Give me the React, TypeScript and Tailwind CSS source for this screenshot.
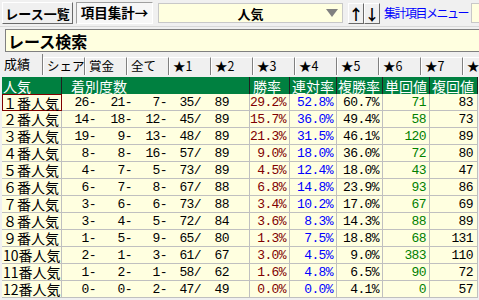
import React from "react";

const rows: string[][] = [
  ["１番人気", "26", "21", "7", "35", "89", "29.2%", "52.8%", "60.7%", "71", "83"],
  ["２番人気", "14", "18", "12", "45", "89", "15.7%", "36.0%", "49.4%", "58", "73"],
  ["３番人気", "19", "9", "13", "48", "89", "21.3%", "31.5%", "46.1%", "120", "89"],
  ["４番人気", "8", "8", "16", "57", "89", "9.0%", "18.0%", "36.0%", "72", "80"],
  ["５番人気", "4", "7", "5", "73", "89", "4.5%", "12.4%", "18.0%", "43", "47"],
  ["６番人気", "6", "7", "8", "67", "88", "6.8%", "14.8%", "23.9%", "93", "86"],
  ["７番人気", "3", "6", "6", "73", "88", "3.4%", "10.2%", "17.0%", "67", "69"],
  ["８番人気", "3", "4", "5", "72", "84", "3.6%", "8.3%", "14.3%", "88", "89"],
  ["９番人気", "1", "5", "9", "65", "80", "1.3%", "7.5%", "18.8%", "68", "131"],
  ["10番人気", "2", "1", "3", "61", "67", "3.0%", "4.5%", "9.0%", "383", "110"],
  ["11番人気", "1", "2", "1", "58", "62", "1.6%", "4.8%", "6.5%", "90", "72"],
  ["12番人気", "0", "0", "2", "47", "49", "0.0%", "0.0%", "4.1%", "0", "57"],
];

const tabs = ["シェア", "賞金", "全て", "★1", "★2", "★3", "★4", "★5", "★6", "★7", "★8"];

const jp = "font-['Noto_Sans_CJK_JP','Noto_Sans',sans-serif]";
const mono = "font-['Liberation_Mono','DejaVu_Sans_Mono',monospace] text-[13px] tracking-[-0.6px]";
const raised = "border border-t-white border-l-white border-r-[#696969] border-b-[#696969]";

export default function App() {
  return (
    <div className={`w-[479px] h-[300px] overflow-hidden bg-[#f0f0f0] ${jp} text-black`}>
      {/* top bar */}
      <div className="h-[27px] flex items-center border-b border-[#d8d8d8] pl-[2px] whitespace-nowrap">
        <div className={`w-[71px] h-[22px] shrink-0 flex items-center justify-center bg-[#f0f0f0] ${raised} text-[13px] font-bold leading-none`}>
          レース一覧
        </div>
        <div className="ml-[3px] w-[77px] h-[22px] shrink-0 flex items-center justify-center bg-[#f7f7f7] border border-t-[#a0a0a0] border-l-[#a0a0a0] border-r-white border-b-white text-[13.5px] font-bold leading-none">
          項目集計→
        </div>
        <div className="ml-[5px] w-[185px] h-[20px] shrink-0 relative flex items-center justify-center bg-[#ffffe0] border border-[#c8c8c8] text-[13px] font-bold leading-none">
          人気
          <svg className="absolute right-[4px] top-[5px]" width="12" height="8" viewBox="0 0 12 8">
            <polygon points="0,0 12,0 6,8" fill="#808080" />
          </svg>
        </div>
        <div className={`ml-[5px] w-[16px] h-[21px] shrink-0 flex items-center justify-center bg-[#f0f0f0] ${raised} text-[15px] font-bold leading-none`}>
          ↑
        </div>
        <div className={`w-[16px] h-[21px] shrink-0 flex items-center justify-center bg-[#f0f0f0] ${raised} text-[15px] font-bold leading-none`}>
          ↓
        </div>
        <div className="ml-[4px] w-[84px] shrink-0 text-[12px] text-[#0000ff] leading-none tracking-[-1.5px]">
          集計項目メニュー
        </div>
        <div className="ml-[3px] flex-1 h-[20px] bg-[#ffffe0] border border-[#c8c8c8] border-r-0" />
      </div>

      {/* search box */}
      <div className="ml-[5px] mt-[2px] h-[23px] flex items-center bg-[#ffffe0] border border-[#808080] border-r-0 pl-[2px] text-[16px] font-bold leading-none whitespace-nowrap">
        レース検索
      </div>

      {/* tabs */}
      <div className="mt-[2px] h-[21px] flex items-end leading-none overflow-hidden whitespace-nowrap">
        <div className="w-[43px] h-[21px] shrink-0 flex items-start pt-[3px] pl-[4px] bg-[#f0f0f0] border-r border-r-[#808080] text-[13px]">
          成績
        </div>
        {tabs.map((t) => (
          <div
            key={t}
            className="w-[42px] h-[18px] shrink-0 flex items-center pl-[3px] border-t border-t-white border-l border-l-white border-r border-r-[#808080] text-[12.5px]"
          >
            {t}
          </div>
        ))}
      </div>

      {/* table */}
      <div className="mt-[2px] ml-[2px] w-[476px] whitespace-nowrap">
        <div className="flex h-[17px] bg-[#008040] text-white text-[14px] leading-none">
          <div className="w-[60px] shrink-0 flex items-center pl-[1px] border-r border-[#202020]">人気</div>
          <div className="w-[188px] shrink-0 flex items-center pl-[9px] border-r border-[#202020]">着別度数</div>
          <div className="w-[40px] shrink-0 flex items-center pl-[3px] border-r border-[#202020]">勝率</div>
          <div className="w-[47px] shrink-0 flex items-center pl-[2px] border-r border-[#202020]">連対率</div>
          <div className="w-[46px] shrink-0 flex items-center pl-[1px] border-r border-[#202020]">複勝率</div>
          <div className="w-[47px] shrink-0 flex items-center pl-[2px] border-r border-[#202020]">単回値</div>
          <div className="w-[48px] shrink-0 flex items-center pl-[2px] border-r border-[#202020]">複回値</div>
        </div>
        {rows.map((r, i) => (
          <div key={i} className="flex h-[17px] bg-[#ffffe0] leading-none">
            <div
              className={`w-[60px] shrink-0 flex items-center text-[14px] ${
                i === 0 ? "border border-[#800000] pl-0" : "border-r border-b border-[#c0c0c0] pl-[1px]"
              }`}
            >
              {r[0]}
            </div>
            <div className={`w-[188px] shrink-0 flex items-center border-r border-b border-[#c0c0c0] ${mono}`}>
              <span className="w-[34px] text-right">{r[1]}-</span>
              <span className="w-[36px] text-right">{r[2]}-</span>
              <span className="w-[35px] text-right">{r[3]}-</span>
              <span className="w-[34px] text-right">{r[4]}/</span>
              <span className="w-[28px] text-right">{r[5]}</span>
            </div>
            <div className={`w-[40px] shrink-0 flex items-center justify-end pr-[3px] border-r border-b border-[#c0c0c0] text-[#800000] ${mono}`}>
              {r[6]}
            </div>
            <div className={`w-[47px] shrink-0 flex items-center justify-end pr-[3px] border-r border-b border-[#c0c0c0] text-[#0000ff] ${mono}`}>
              {r[7]}
            </div>
            <div className={`w-[46px] shrink-0 flex items-center justify-end pr-[3px] border-r border-b border-[#c0c0c0] ${mono}`}>
              {r[8]}
            </div>
            <div className={`w-[47px] shrink-0 flex items-center justify-end pr-[3px] border-r border-b border-[#c0c0c0] text-[#008000] ${mono}`}>
              {r[9]}
            </div>
            <div className={`w-[48px] shrink-0 flex items-center justify-end pr-[4px] border-r border-b border-[#c0c0c0] ${mono}`}>
              {r[10]}
            </div>
          </div>
        ))}
      </div>
    </div>
  );
}
